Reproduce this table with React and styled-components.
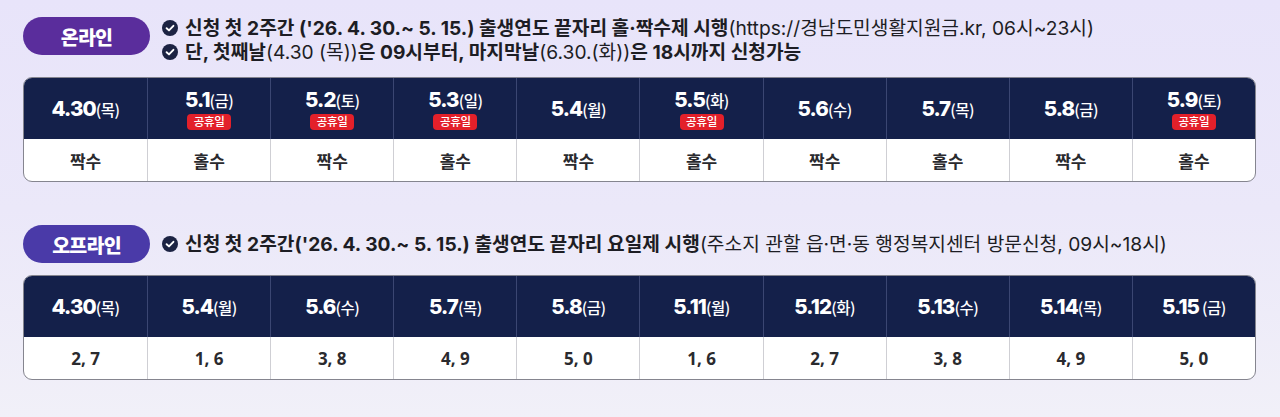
import React from "react";
import styled, { createGlobalStyle } from "styled-components";

const Global = createGlobalStyle`
  html, body { margin: 0; padding: 0; }
  body {
    font-family: Inter, "Noto Sans CJK KR", sans-serif;
    background: linear-gradient(180deg, #e8e4fa 0%, #ebe8f9 50%, #f1f0f8 100%);
    width: 1280px;
    height: 417px;
    overflow: hidden;
  }
`;

const Page = styled.div`
  padding: 17px 24px 0 23px;
  display: flex;
  flex-direction: column;
`;

const Section = styled.section`
  display: flex;
  flex-direction: column;
  margin-top: ${(p) => p.$top || 0}px;
`;

const Head = styled.div`
  display: flex;
  align-items: ${(p) => (p.$single ? "center" : "flex-start")};
  gap: 12px;
`;

const Pill = styled.div`
  flex: none;
  width: 127px;
  height: 38px;
  border-radius: 19px;
  background: ${(p) => p.$color};
  color: #fff;
  font-family: "Noto Sans CJK KR", sans-serif;
  font-weight: 900;
  font-size: 19.5px;
  display: flex;
  align-items: center;
  justify-content: center;
  letter-spacing: -0.8px;
`;

const Lines = styled.div`
  display: flex;
  flex-direction: column;
  margin-top: ${(p) => (p.$single ? 0 : -1)}px;
`;

const Line = styled.div`
  display: flex;
  align-items: center;
  gap: 7px;
  font-family: Inter, "Noto Sans CJK KR", sans-serif;
  font-size: 19.2px;
  line-height: 24px;
  color: #1d1d24;
  letter-spacing: 0;
  white-space: nowrap;
`;

const B = styled.span`
  font-weight: 700;
`;

const N = styled.span`
  font-weight: 400;
`;

const Check = () => (
  <svg width="16" height="16" viewBox="0 0 16 16" style={{ flex: "none" }}>
    <circle cx="8" cy="8" r="8" fill="#1c2343" />
    <path d="M4.6 8.2 L7 10.4 L11.4 5.8" stroke="#fff" strokeWidth="1.9" fill="none" strokeLinecap="round" strokeLinejoin="round" />
  </svg>
);

const Table = styled.div`
  margin-top: ${(p) => p.$mt}px;
  display: grid;
  grid-template-columns: repeat(10, 1fr);
  border: 1px solid #85858f;
  border-radius: 9px;
  overflow: hidden;
  background: #fff;
`;

const HeadCell = styled.div`
  height: 61px;
  background: #14204a;
  border-left: ${(p) => (p.$first ? "none" : "1px solid #3b4672")};
  display: flex;
  flex-direction: column;
  align-items: center;
  justify-content: center;
  gap: 2px;
  color: #fff;
`;

const DateText = styled.div`
  display: flex;
  align-items: baseline;
  line-height: 24px;
  font-family: Inter, "Noto Sans CJK KR", sans-serif;
`;

const Num = styled.span`
  font-size: 20.5px;
  font-weight: 800;
  letter-spacing: -0.9px;
`;

const Day = styled.span`
  font-family: "Noto Sans CJK KR", sans-serif;
  font-size: 15.5px;
  font-weight: 500;
  letter-spacing: -0.5px;
`;

const Badge = styled.span`
  display: inline-flex;
  align-items: center;
  justify-content: center;
  width: 44px;
  height: 16px;
  border-radius: 4px;
  background: #e3202a;
  color: #fff;
  font-family: "Noto Sans CJK KR", sans-serif;
  font-size: 11.5px;
  font-weight: 500;
  letter-spacing: -0.3px;
  line-height: 1;
`;

const BodyCell = styled.div`
  height: 42px;
  border-left: ${(p) => (p.$first ? "none" : "1px solid #cfcfd4")};
  display: flex;
  align-items: center;
  justify-content: center;
  font-family: "Noto Sans", "Noto Sans CJK KR", sans-serif;
  font-size: 17px;
  font-weight: 700;
  color: #2a2a2e;
  letter-spacing: 0;
`;

const online = [
  ["4.30", "(목)", false, "짝수"],
  ["5.1", "(금)", true, "홀수"],
  ["5.2", "(토)", true, "짝수"],
  ["5.3", "(일)", true, "홀수"],
  ["5.4", "(월)", false, "짝수"],
  ["5.5", "(화)", true, "홀수"],
  ["5.6", "(수)", false, "짝수"],
  ["5.7", "(목)", false, "홀수"],
  ["5.8", "(금)", false, "짝수"],
  ["5.9", "(토)", true, "홀수"],
];

const offline = [
  ["4.30", "(목)", "2, 7"],
  ["5.4", "(월)", "1, 6"],
  ["5.6", "(수)", "3, 8"],
  ["5.7", "(목)", "4, 9"],
  ["5.8", "(금)", "5, 0"],
  ["5.11", "(월)", "1, 6"],
  ["5.12", "(화)", "2, 7"],
  ["5.13", "(수)", "3, 8"],
  ["5.14", "(목)", "4, 9"],
  ["5.15", "\u00a0(금)", "5, 0"],
];

export default function App() {
  return (
    <>
      <Global />
      <Page>
        <Section>
          <Head>
            <Pill $color="#5a2d9c">온라인</Pill>
            <Lines>
              <Line>
                <Check />
                <span>
                  <B>신청 첫 2주간 ('26. 4. 30.~ 5. 15.) 출생연도 끝자리 홀·짝수제 시행</B>
                  <N>(https://경남도민생활지원금.kr, 06시~23시)</N>
                </span>
              </Line>
              <Line>
                <Check />
                <span>
                  <B>단, 첫째날</B>
                  <N>(4.30 (목))</N>
                  <B>은 09시부터, 마지막날</B>
                  <N>(6.30.(화))</N>
                  <B>은 18시까지 신청가능</B>
                </span>
              </Line>
            </Lines>
          </Head>
          <Table $mt={13}>
            {online.map(([d, w, h], i) => (
              <HeadCell key={"h" + i} $first={i === 0}>
                <DateText>
                  <Num>{d}</Num>
                  <Day>{w}</Day>
                </DateText>
                {h && <Badge>공휴일</Badge>}
              </HeadCell>
            ))}
            {online.map(([, , , v], i) => (
              <BodyCell key={"b" + i} $first={i === 0}>{v}</BodyCell>
            ))}
          </Table>
        </Section>
        <Section $top={43}>
          <Head $single>
            <Pill $color="#4a3aa8">오프라인</Pill>
            <Lines $single>
              <Line>
                <Check />
                <span>
                  <B>신청 첫 2주간('26. 4. 30.~ 5. 15.) 출생연도 끝자리 요일제 시행</B>
                  <N>(주소지 관할 읍·면·동 행정복지센터 방문신청, 09시~18시)</N>
                </span>
              </Line>
            </Lines>
          </Head>
          <Table $mt={12}>
            {offline.map(([d, w], i) => (
              <HeadCell key={"h" + i} $first={i === 0}>
                <DateText>
                  <Num>{d}</Num>
                  <Day>{w}</Day>
                </DateText>
              </HeadCell>
            ))}
            {offline.map(([, , v], i) => (
              <BodyCell key={"b" + i} $first={i === 0}>{v}</BodyCell>
            ))}
          </Table>
        </Section>
      </Page>
    </>
  );
}
